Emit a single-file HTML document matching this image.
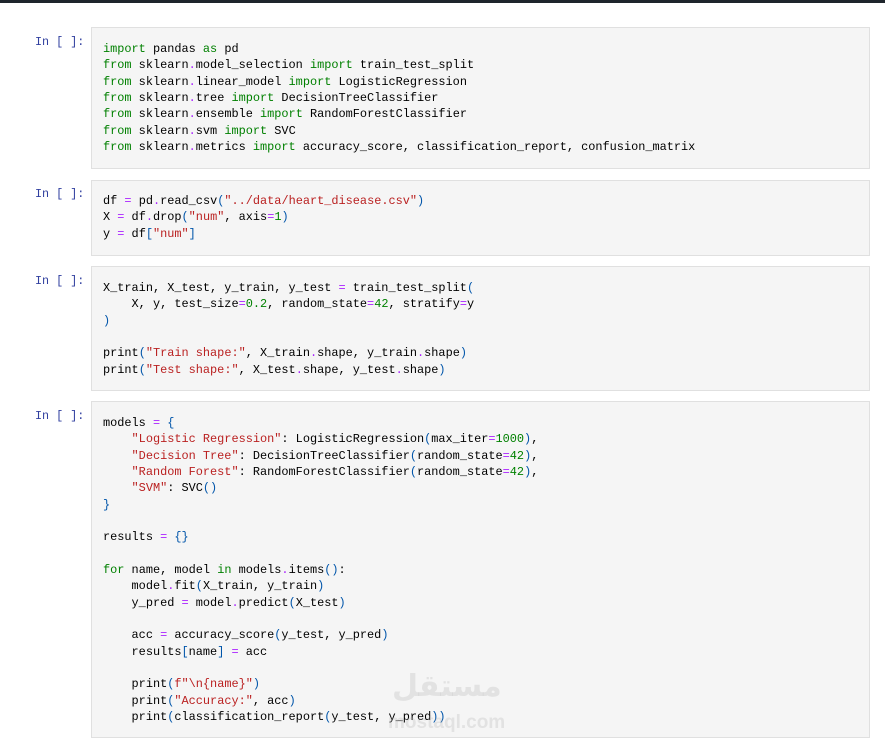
<!DOCTYPE html>
<html><head><meta charset="utf-8"><style>
body{margin:0;width:885px;height:747px;background:#fff;position:relative;overflow:hidden;font-family:"Liberation Mono",monospace;}
.top{position:absolute;left:0;top:0;width:885px;height:3px;background:#1e252c;}
.pr{position:absolute;left:35px;color:#303f9f;font-size:11.75px;line-height:16px;}
.c{position:absolute;left:91px;width:779px;background:#f5f5f5;border:1px solid #e0e0e0;box-sizing:border-box;}
pre{margin:0;padding:13px 0 0 11px;font-family:"Liberation Mono",monospace;font-size:11.9px;line-height:16.33px;color:#000;}
.k{color:#008000;}
.s{color:#ba2121}
.n{color:#008000}
.o{color:#aa22ff}
.p{color:#0055aa}
.wm{position:absolute;left:388px;top:672px;color:rgba(170,170,170,0.25);font-family:"Liberation Sans",sans-serif;font-weight:bold;font-size:22px;line-height:22px;}
</style></head><body>
<div class="top"></div>

<div class="pr" style="top:34px">In [ ]:</div>
<div class="c" style="top:27px;height:142px"><pre><span class="k">import</span> pandas <span class="k">as</span> pd
<span class="k">from</span> sklearn<span class="o">.</span>model_selection <span class="k">import</span> train_test_split
<span class="k">from</span> sklearn<span class="o">.</span>linear_model <span class="k">import</span> LogisticRegression
<span class="k">from</span> sklearn<span class="o">.</span>tree <span class="k">import</span> DecisionTreeClassifier
<span class="k">from</span> sklearn<span class="o">.</span>ensemble <span class="k">import</span> RandomForestClassifier
<span class="k">from</span> sklearn<span class="o">.</span>svm <span class="k">import</span> SVC
<span class="k">from</span> sklearn<span class="o">.</span>metrics <span class="k">import</span> accuracy_score, classification_report, confusion_matrix</pre></div>

<div class="pr" style="top:186px">In [ ]:</div>
<div class="c" style="top:180px;height:76px"><pre style="padding-top:12px">df <span class="o">=</span> pd<span class="o">.</span>read_csv<span class="p">(</span><span class="s">"../data/heart_disease.csv"</span><span class="p">)</span>
X <span class="o">=</span> df<span class="o">.</span>drop<span class="p">(</span><span class="s">"num"</span>, axis<span class="o">=</span><span class="n">1</span><span class="p">)</span>
y <span class="o">=</span> df<span class="p">[</span><span class="s">"num"</span><span class="p">]</span></pre></div>

<div class="pr" style="top:273px">In [ ]:</div>
<div class="c" style="top:266px;height:125px"><pre>X_train, X_test, y_train, y_test <span class="o">=</span> train_test_split<span class="p">(</span>
    X, y, test_size<span class="o">=</span><span class="n">0.2</span>, random_state<span class="o">=</span><span class="n">42</span>, stratify<span class="o">=</span>y
<span class="p">)</span>

print<span class="p">(</span><span class="s">"Train shape:"</span>, X_train<span class="o">.</span>shape, y_train<span class="o">.</span>shape<span class="p">)</span>
print<span class="p">(</span><span class="s">"Test shape:"</span>, X_test<span class="o">.</span>shape, y_test<span class="o">.</span>shape<span class="p">)</span></pre></div>

<div class="pr" style="top:408px">In [ ]:</div>
<div class="c" style="top:401px;height:337px"><pre>models <span class="o">=</span> <span class="p">{</span>
    <span class="s">"Logistic Regression"</span>: LogisticRegression<span class="p">(</span>max_iter<span class="o">=</span><span class="n">1000</span><span class="p">)</span>,
    <span class="s">"Decision Tree"</span>: DecisionTreeClassifier<span class="p">(</span>random_state<span class="o">=</span><span class="n">42</span><span class="p">)</span>,
    <span class="s">"Random Forest"</span>: RandomForestClassifier<span class="p">(</span>random_state<span class="o">=</span><span class="n">42</span><span class="p">)</span>,
    <span class="s">"SVM"</span>: SVC<span class="p">()</span>
<span class="p">}</span>

results <span class="o">=</span> <span class="p">{}</span>

<span class="k">for</span> name, model <span class="k">in</span> models<span class="o">.</span>items<span class="p">()</span>:
    model<span class="o">.</span>fit<span class="p">(</span>X_train, y_train<span class="p">)</span>
    y_pred <span class="o">=</span> model<span class="o">.</span>predict<span class="p">(</span>X_test<span class="p">)</span>

    acc <span class="o">=</span> accuracy_score<span class="p">(</span>y_test, y_pred<span class="p">)</span>
    results<span class="p">[</span>name<span class="p">]</span> <span class="o">=</span> acc

    print<span class="p">(</span><span class="s">f"\n{name}"</span><span class="p">)</span>
    print<span class="p">(</span><span class="s">"Accuracy:"</span>, acc<span class="p">)</span>
    print<span class="p">(</span>classification_report<span class="p">(</span>y_test, y_pred<span class="p">))</span></pre></div>

<div class="wm" style="font-size:30px;left:392px;top:676px;font-family:'Liberation Sans','DejaVu Sans',sans-serif">مستقل</div>
<div class="wm" style="left:388px;top:712px;font-size:19px">mostaql.com</div>
</body></html>
